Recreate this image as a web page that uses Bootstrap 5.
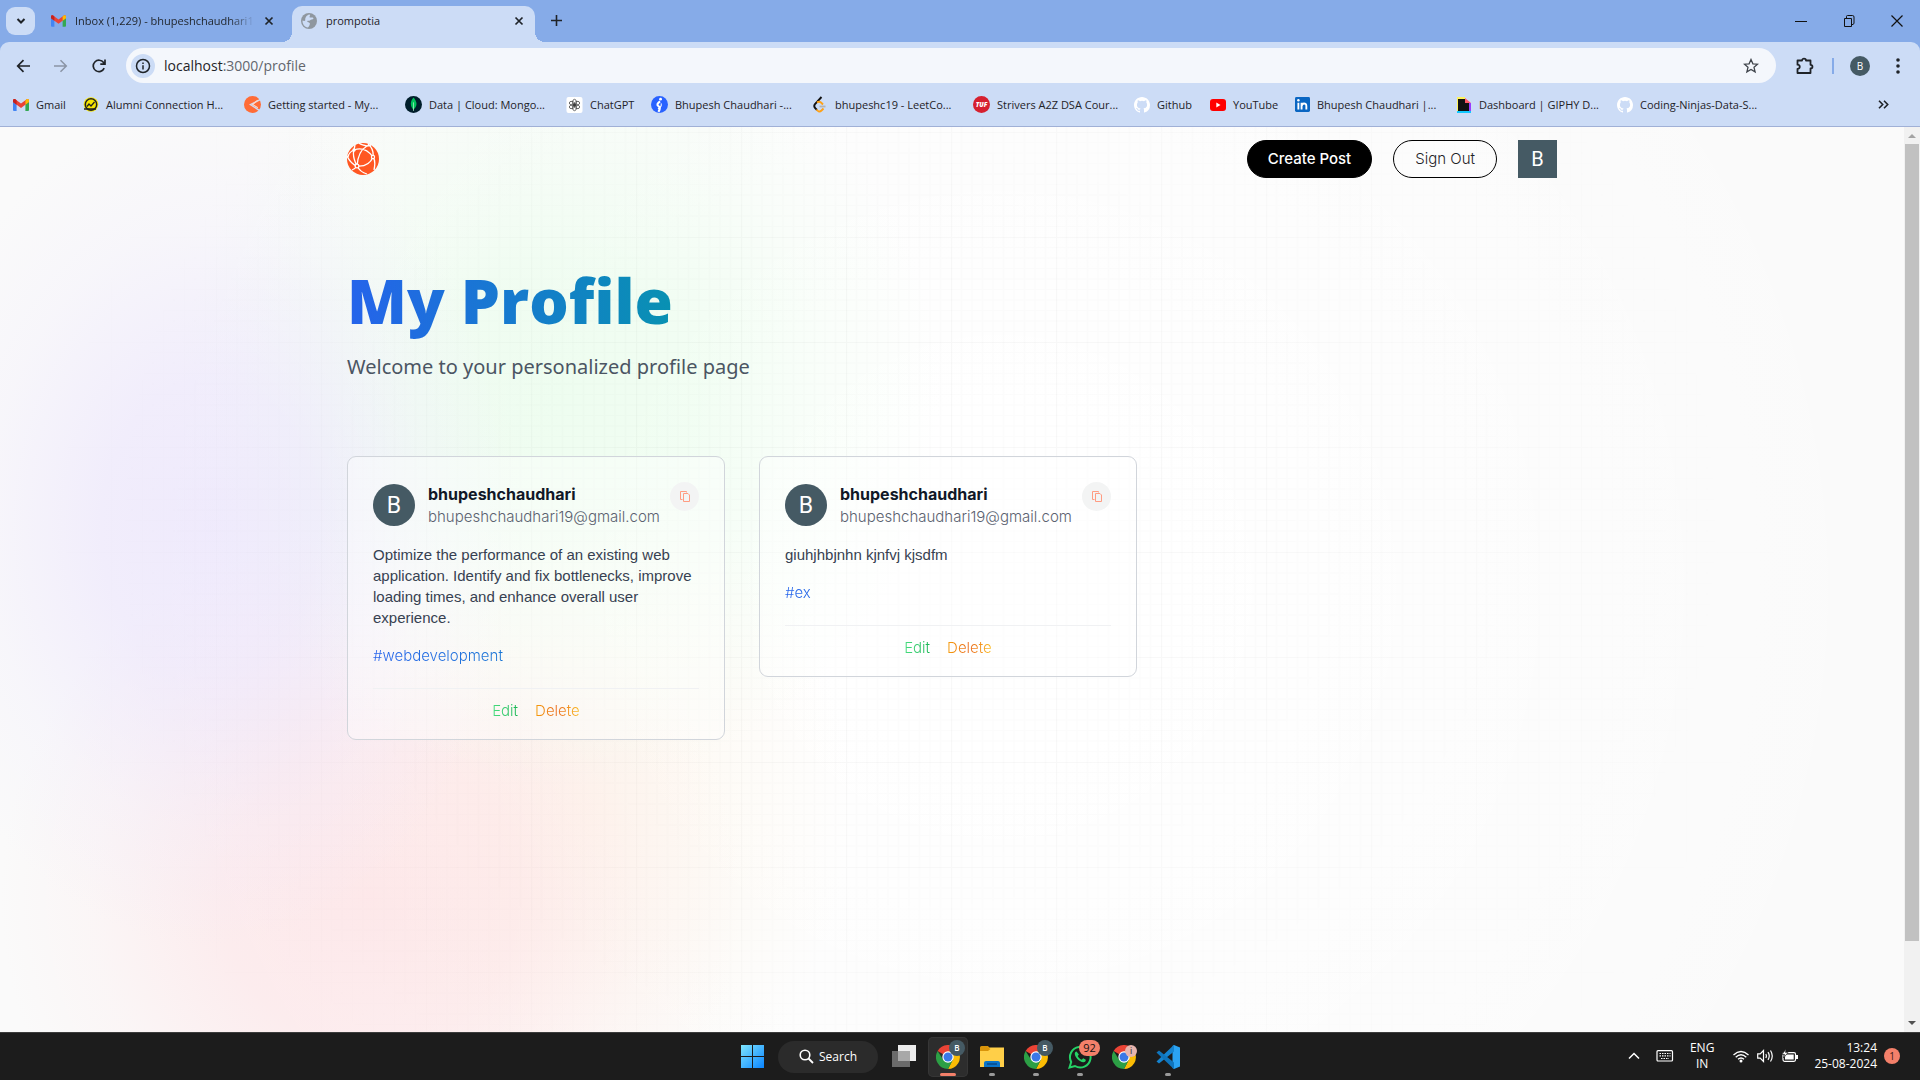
<!DOCTYPE html>
<html lang="en">
<head>
<meta charset="utf-8">
<meta name="viewport" content="width=device-width, initial-scale=1">
<title>prompotia</title>
<link href="https://cdn.jsdelivr.net/npm/bootstrap@5.3.0/dist/css/bootstrap.min.css" rel="stylesheet">
<style>
  :root { --ui: "Open Sans", "Noto Sans", sans-serif; --app: Inter, sans-serif; }
  body { font-family: var(--ui); font-size: 11px; line-height: 16px; color: #1f2328; }
  button { font: inherit; color: inherit; border: 0; background: none; padding: 0; }
  a { color: inherit; text-decoration: none; }
  svg { display: block; flex: none; }

  /* browser window */
  .tabstrip { height: 42px; background: #86abe8; padding-left: 6px; }
  .tab-search { width: 29px; height: 28px; border-radius: 9px; background: #ccdcf6; margin-bottom: 7px; }
  .tab-item { height: 36px; padding: 0 18px 6px 16px; gap: 9px; }
  .tab-idle { width: 257px; }
  .tab-idle .tab-title { -webkit-mask-image: linear-gradient(90deg, #000 86%, transparent); mask-image: linear-gradient(90deg, #000 86%, transparent); }
  .tab-title { flex: 1; overflow: hidden; white-space: nowrap; }
  .tab-current { position: relative; width: 243px; background: #ccdcf6; border-radius: 10px 10px 0 0; padding: 0 11px 6px 9px; }
  .tab-current::before, .tab-current::after { content: ""; position: absolute; bottom: 0; width: 10px; height: 10px; }
  .tab-current::before { left: -10px; background: radial-gradient(circle at 0 0, transparent 10px, #ccdcf6 10px); }
  .tab-current::after { right: -10px; background: radial-gradient(circle at 100% 0, transparent 10px, #ccdcf6 10px); }
  .window-keys { gap: 32px; padding-right: 17px; }
  .toolbar-wrap { background: #86abe8; }
  .toolbar-row { height: 47px; background: #ccdcf6; border-radius: 9px 9px 0 0; padding: 0 18px 0 16px; }
  .omnibox { height: 35px; background: #f4f7fc; border-radius: 18px; padding: 0 17px 0 5px; margin: 0 20px 0 20px; }
  .site-info { width: 24px; height: 24px; border-radius: 50%; background: #ccdcf6; }
  .address { font-size: 14px; color: #62666d; margin-left: 9px; }
  .address b { font-weight: 400; color: #1f2328; }
  .account { width: 20px; height: 20px; border-radius: 50%; background: #455a64; color: #fff; font-size: 10px; }
  .bookmarks { height: 38px; background: #ccdcf6; border-bottom: 1px solid #a0b0d6; padding: 0 31px 6px 13px; }
  .bookmark { gap: 7px; white-space: nowrap; flex: none; }
  .bookmark.long { width: 161px; } .bookmark.mini { width: 70px; } .bookmark.mid { width: 76px; } .bookmark.wide { width: 85px; }

  /* page */
  .viewport { position: relative; background: #fafafa; overflow: hidden; min-height: 0; }
  .glow { position: absolute; inset: 0; background:
      radial-gradient(ellipse 310px 420px at 210px 400px, rgba(232,224,253,.62), rgba(232,224,253,.5) 35%, rgba(236,230,253,.2) 72%, transparent),
      radial-gradient(ellipse 380px 390px at 560px 270px, rgba(226,253,229,.56), rgba(226,253,229,.44) 35%, rgba(232,254,234,.2) 72%, transparent),
      radial-gradient(ellipse 370px 370px at 370px 770px, rgba(254,222,225,.66), rgba(254,222,225,.5) 40%, rgba(254,228,230,.2) 75%, transparent),
      radial-gradient(ellipse 260px 330px at 590px 680px, rgba(253,243,226,.55), transparent),
      radial-gradient(ellipse 900px 900px at 1000px 460px, #fff 20%, rgba(255,255,255,0)); }
  .grid-lines { position: absolute; inset: 0; width: 100%; height: 100%;
      -webkit-mask-image: radial-gradient(ellipse 900px 800px at 920px 400px, #000 30%, transparent); mask-image: radial-gradient(ellipse 900px 800px at 920px 400px, #000 30%, transparent); }
  .page-scroll { position: relative; }
  .page-inner { max-width: 1210px; margin: 0 auto; font-family: var(--app); }
  .site-nav { padding-top: 13px; }
  .nav-keys { gap: 21px; font-size: 15px; }
  .pill { height: 38px; border-radius: 19px; border: 1px solid #000; padding: 0 21px; font-weight: 300; }
  .pill-dark { background: #000; color: #fff; font-weight: 500; padding: 0 20px; }
  .face { background: #455a64; color: #fff; font-family: Roboto, sans-serif; font-weight: 400; flex: none; }
  .face-nav { width: 39px; height: 38px; font-size: 20px; }
  .face-card { width: 42px; height: 42px; border-radius: 50%; font-size: 23px; }
  .page-title { font-family: var(--ui); font-weight: 800; font-size: 62px; line-height: 62px; margin: 91px 0 0; width: max-content;
      background: linear-gradient(90deg, #2563eb, #0891b2); -webkit-background-clip: text; background-clip: text; color: transparent; padding-bottom: 16px; }
  .page-lead { font-family: "Noto Sans", sans-serif; font-size: 20px; line-height: 30px; color: #4b5563; margin: 5px 0 0; }
  .card-list { gap: 34px; margin-top: 74px; }
  .prompt-card { width: 378px; border: 1px solid #d1d5db; border-radius: 9px; background: rgba(255,255,255,.4); padding: 25px 25px 18px; font-size: 15px; line-height: 21px; font-weight: 300; }
  .card-top { height: 46px; }
  .who { margin-left: 13px; }
  .who h3 { font-size: 16px; line-height: 24px; font-weight: 700; color: #111827; margin: 0; }
  .who p { line-height: 22px; color: #5b6270; margin: 0; }
  .copy-key { width: 29px; height: 29px; border-radius: 50%; background: #f3f4f4; }
  .prompt-text { font-family: "Liberation Sans", sans-serif; font-weight: 400; color: #374151; margin: 16px 0 0; }
  .ink { -webkit-background-clip: text; background-clip: text; color: transparent; }
  .prompt-tag { display: block; margin-top: 17px; background-image: linear-gradient(90deg, #2563eb, #0891b2); }
  .card-foot { border-top: 1px solid #f0f1f3; margin-top: 22px; padding-top: 11px; gap: 17px; }
  .ink-green { background-image: linear-gradient(90deg, #4ade80, #16b552); }
  .ink-orange { background-image: linear-gradient(90deg, #f59e0b, #ea6a1b 50%, #fbbf24); }
  .scroller { width: 16px; background: #f1f1f1; flex: none; padding-top: 5px; padding-bottom: 4px; }
  .scroller-thumb { flex: 0 0 89%; width: 14px; background: #c1c1c1; }

  /* taskbar */
  .taskbar { height: 48px; background: #1c1c1c; border-top: 1px solid #3c3c3c; color: #fff; position: relative; font-size: 12px; }
  .dock { gap: 4px; }
  .dock-key { position: relative; width: 40px; height: 40px; border-radius: 5px; }
  .dock-key.open { background: #2d2d2d; box-shadow: inset 0 0 0 1px #363636; }
  .dock-key.run::after { content: ""; position: absolute; bottom: 1px; left: 17px; width: 6px; height: 3px; border-radius: 2px; background: #9a9a9a; }
  .dock-key.open::after { left: 12px; width: 16px; background: #f4806a; }
  .dock-badge { position: absolute; top: 3px; left: 21px; width: 16px; height: 16px; border-radius: 50%; background: #455a64; font-size: 8px; font-weight: 600; line-height: 16px; text-align: center; }
  .dock-badge.count { top: 3px; left: 19px; width: 21px; background: #f4806a; color: #111; border-radius: 8px; font-size: 11px; font-weight: 400; }
  .dock-badge.pic { left: 21px; top: 8px; width: 12px; height: 12px; background: #e7b4ae; color: #444; line-height: 12px; }
  .dock-search { width: 100px; height: 32px; border-radius: 16px; background: #2b2b2b; gap: 5px; margin: 0 2px; }
  .tray { position: absolute; right: 20px; top: 0; height: 46px; line-height: 16px; }
  .tray-lang { margin: 0 19px 0 16px; text-align: center; }
  .tray-clock { margin: 0 7px 0 16px; text-align: right; }
  .bell { width: 16px; height: 16px; border-radius: 50%; background: #f4806a; color: #3a1a14; font-size: 10px; }
</style>
<script src="https://cdn.jsdelivr.net/npm/bootstrap@5.3.0/dist/js/bootstrap.bundle.min.js"></script>
</head>
<body class="vh-100 d-flex flex-column overflow-hidden">

<svg width="0" height="0" class="position-absolute" aria-hidden="true">
  <symbol id="i-gmail" viewBox="0 0 16 12"><path d="M0 1.5V11a1 1 0 0 0 1 1h2.600V5z" fill="#4285f4"/><path d="M16 1.500V11a1 1 0 0 1-1 1h-2.600V5z" fill="#34a853"/><path d="M0 1.500C0 0 1.600-.4 2.600.4L8 4.500 13.400.4C14.400-.4 16 0 16 1.500V3L8 9 0 3z" fill="#ea4335"/><path d="M12.400 1.200l1-.8C14.400-.4 16 0 16 1.500V3l-3.600 2.700z" fill="#fbbc04"/><path d="M0 1.500C0 0 1.600-.4 2.600.4l1 .8v4.500L0 3z" fill="#c5221f"/></symbol>
  <symbol id="i-x" viewBox="0 0 10 10"><path d="M1.500 1.500l7 7M8.500 1.500l-7 7" stroke="currentColor" stroke-width="1.700" fill="none"/></symbol>
  <symbol id="i-github" viewBox="0 0 16 16"><path fill="#fff" d="M8 0C3.580 0 0 3.580 0 8c0 3.540 2.290 6.530 5.470 7.590.4.070.55-.17.55-.38 0-.19-.01-.82-.01-1.490-2.010.37-2.530-.49-2.690-.94-.09-.23-.48-.94-.82-1.130-.28-.15-.68-.52-.01-.53.63-.01 1.080.58 1.230.82.72 1.210 1.870.87 2.330.66.070-.52.28-.87.51-1.070-1.780-.2-3.640-.89-3.640-3.950 0-.87.31-1.590.82-2.150-.08-.2-.36-1.020.08-2.120 0 0 .67-.21 2.200.82a7.600 7.600 0 0 1 4 0c1.530-1.040 2.200-.82 2.200-.82.44 1.100.16 1.920.08 2.120.51.56.82 1.270.82 2.150 0 3.070-1.870 3.750-3.650 3.950.29.25.54.73.54 1.480 0 1.070-.01 1.930-.01 2.200 0 .21.15.46.55.38A8 8 0 0 0 16 8c0-4.420-3.580-8-8-8z"/></symbol>
  <symbol id="i-chrome" viewBox="0 0 24 24"><path d="M12 12L1.600 6A12 12 0 0 1 22.400 6z" fill="#ea4335"/><path d="M12 6.500H22.600A12 12 0 0 1 12 24l4.800-9.300z" fill="#fbbc04"/><path d="M7.200 14.700L1.600 6A12 12 0 0 0 12 24l4.800-9.300z" fill="#2c9f45"/><circle cx="12" cy="12" r="5.700" fill="#fff"/><circle cx="12" cy="12" r="4.500" fill="#3b78e7"/></symbol>
  <symbol id="i-copy" viewBox="0 0 12 13"><path d="M4.500 3.500h4.500l1.500 1.500v6.500h-6zM3.500 9.500h-2v-8h6v1" fill="none" stroke="#ff9c82" stroke-width="1"/></symbol>
</svg>

<header>
  <div class="tabstrip d-flex align-items-end">
    <button class="tab-search d-flex align-items-center justify-content-center" aria-label="Search tabs"><svg width="10" height="8" viewBox="0 0 10 8"><path d="M1.500 2L5 5.500 8.500 2" fill="none" stroke="#1f2328" stroke-width="2"/></svg></button>
    <div class="tab-item tab-idle d-flex align-items-center">
      <svg width="15" height="12"><use href="#i-gmail"/></svg>
      <span class="tab-title">Inbox (1,229) - bhupeshchaudhari1</span>
      <button aria-label="Close tab"><svg width="10" height="10"><use href="#i-x"/></svg></button>
    </div>
    <div class="tab-item tab-current d-flex align-items-center">
      <svg width="16" height="16" viewBox="0 0 16 16"><circle cx="8" cy="8" r="8" fill="#8f979f"/><path d="M8.500 1.600c1.500.4-.5 1.800.3 2.800 1 .6 3-.4 3.600.8.300 1.300-2.600 1-3.400 2.200-1 .9-2.500-.2-2.800 1 .2 1 2.200.6 2.700 1.800 0 1.500-1 3.600-2 4.300C3.500 14 1.300 11 1.500 7.500 2.400 8 4 8.400 4.300 7.200 4 5.500 5 2.200 8.500 1.600z" fill="#ccdcf6"/></svg>
      <span class="tab-title">prompotia</span>
      <button aria-label="Close tab"><svg width="10" height="10"><use href="#i-x"/></svg></button>
    </div>
    <button class="ms-3 mb-3" aria-label="New tab"><svg width="11" height="11" viewBox="0 0 11 11"><path d="M5.500 0v11M0 5.500h11" stroke="#1f2328" stroke-width="1.600"/></svg></button>
    <div class="window-keys d-flex align-items-center ms-auto h-100">
      <button aria-label="Minimize"><svg width="12" height="12"><path d="M0 6.500h12" stroke="#111"/></svg></button>
      <button class="ms-1" aria-label="Restore"><svg width="12" height="12" viewBox="0 0 12 12"><path d="M1.500 3.500h7v8h-7zM3.500 3V1.500q0-1 1-1h5q1.500 0 1.500 1.500v6q0 1-1 1.500H9" fill="none" stroke="#111"/></svg></button>
      <button class="ms-1" aria-label="Close"><svg width="12" height="12"><path d="M.5.5l11 11M11.500.5l-11 11" stroke="#111" stroke-width="1.200"/></svg></button>
    </div>
  </div>
  <div class="toolbar-wrap">
    <div class="toolbar-row d-flex align-items-center">
      <button aria-label="Back"><svg width="14" height="14" viewBox="0 0 14 14"><path d="M14 7H2M7.500 1.200L1.700 7l5.800 5.800" fill="none" stroke="#1f2328" stroke-width="1.700"/></svg></button>
      <button class="ms-4" aria-label="Forward"><svg width="14" height="14" viewBox="0 0 14 14"><path d="M0 7h12M6.500 1.200L12.300 7l-5.800 5.800" fill="none" stroke="#8a94a5" stroke-width="1.500"/></svg></button>
      <button class="ms-4" aria-label="Reload"><svg width="14" height="14" viewBox="0 0 14 14"><path d="M12.200 9.200A5.700 5.700 0 1 1 11.600 3.600L12.800 5M13 .5V5.200H8.300" fill="none" stroke="#1f2328" stroke-width="1.700"/></svg></button>
      <div class="omnibox d-flex align-items-center flex-grow-1">
        <button class="site-info d-flex align-items-center justify-content-center" aria-label="Site information"><svg width="16" height="16" viewBox="0 0 16 16"><circle cx="8" cy="8" r="6.500" fill="none" stroke="#1f2328" stroke-width="1.500"/><path d="M8 7.200V11.500M8 4.500v1.500" stroke="#1f2328" stroke-width="1.500"/></svg></button>
        <span class="address flex-grow-1" role="textbox" aria-label="Address" contenteditable="true" spellcheck="false"><b>localhost</b>:3000/profile</span>
        <button aria-label="Bookmark this tab"><svg width="16" height="16" viewBox="0 0 16 16"><path d="M8 1.500l1.900 4.300 4.700.4-3.600 3.100 1.100 4.600L8 11.500l-4.100 2.400L5 9.300 1.400 6.200l4.700-.4z" fill="none" stroke="#3f444b" stroke-width="1.300"/></svg></button>
      </div>
      <button aria-label="Extensions"><svg width="18" height="18" viewBox="0 0 18 18"><path d="M1.500 3.500h4.500c0-2.500 4-2.500 4 0h4.500v4.300c2.600 0 2.600 3.700 0 3.700v4.500h-13v-4c3-.5 3-4 0-4.300z" fill="none" stroke="#1f2328" stroke-width="1.800" stroke-linejoin="round"/></svg></button>
      <svg class="ms-3" width="12" height="16"><path d="M3 0v16" stroke="#86abe8" stroke-width="2"/></svg>
      <button class="account ms-2 d-flex align-items-center justify-content-center" aria-label="Account">B</button>
      <button class="ms-3 ps-1" aria-label="Menu"><svg width="12" height="16" viewBox="0 0 12 16"><g fill="#1f2328"><circle cx="8" cy="2" r="1.800"/><circle cx="8" cy="8" r="1.800"/><circle cx="8" cy="14" r="1.800"/></g></svg></button>
    </div>
  </div>
  <nav class="bookmarks d-flex align-items-center">
    <a href="#" class="bookmark mini d-flex align-items-center"><svg width="16" height="12"><use href="#i-gmail"/></svg>Gmail</a>
    <a href="#" class="bookmark long d-flex align-items-center"><svg width="16" height="16" viewBox="0 0 16 16"><circle cx="8" cy="7.500" r="7.300" fill="#f7e600"/><circle cx="8" cy="7.500" r="5.700" fill="none" stroke="#222" stroke-width="1.500"/><path d="M1 12h12M4 9.500l2-2.500 2 2 3.500-4" fill="none" stroke="#222" stroke-width="1.300"/></svg>Alumni Connection H...</a>
    <a href="#" class="bookmark long d-flex align-items-center"><svg width="17" height="17" viewBox="0 0 16 16"><circle cx="8" cy="8" r="8" fill="#ff6c37"/><path d="M16 3L6 8l9 6" fill="none" stroke="#ccdcf6" stroke-width="1.300"/><path d="M13 4L8 8l5 3" fill="none" stroke="#ffd9c9" stroke-width="1"/></svg>Getting started - My...</a>
    <a href="#" class="bookmark long d-flex align-items-center"><svg width="17" height="17" viewBox="0 0 16 16"><circle cx="8" cy="8" r="8" fill="#001e2b"/><path d="M8 1.500c3.500 4 4 8-.1 11.500C4.500 9.500 4.800 5 8 1.500z" fill="#00c25a"/><path d="M8 6v8" stroke="#b8f0cc" stroke-width=".7"/></svg>Data | Cloud: Mongo...</a>
    <a href="#" class="bookmark wide d-flex align-items-center"><svg width="17" height="16" viewBox="0 0 16 16"><rect width="16" height="16" rx="2" fill="#fff"/><g fill="none" stroke="#333" stroke-width=".7"><ellipse cx="8" cy="5.500" rx="2" ry="3.200"/><ellipse cx="8" cy="5.500" rx="2" ry="3.200" transform="rotate(60 8 8)"/><ellipse cx="8" cy="5.500" rx="2" ry="3.200" transform="rotate(120 8 8)"/><ellipse cx="8" cy="5.500" rx="2" ry="3.200" transform="rotate(180 8 8)"/><ellipse cx="8" cy="5.500" rx="2" ry="3.200" transform="rotate(240 8 8)"/><ellipse cx="8" cy="5.500" rx="2" ry="3.200" transform="rotate(300 8 8)"/></g></svg>ChatGPT</a>
    <a href="#" class="bookmark long d-flex align-items-center"><svg width="17" height="17" viewBox="0 0 16 16"><circle cx="8" cy="8" r="8" fill="#2962ff"/><path d="M8.500 5q-4 3-1.500 4.500 2.500 1.500 0 5.500" fill="none" stroke="#fff" stroke-width="2"/><path d="M6.500 12q4-1.500 3-5" fill="none" stroke="#fff" stroke-width="1"/><circle cx="9" cy="3" r="1.300" fill="#fff"/></svg>Bhupesh Chaudhari -...</a>
    <a href="#" class="bookmark long d-flex align-items-center"><svg width="16" height="17" viewBox="0 0 16 17"><path d="M9.500 1L3 8q-1.500 2 0 4l2 2" fill="none" stroke="#111" stroke-width="1.900"/><path d="M5 6.500q2-1.600 4 0l2 2M4.500 13.500q2.500 3.500 5 1l2-2" fill="none" stroke="#ffa116" stroke-width="1.900"/><path d="M7.500 10.500h6" stroke="#b3b3b3" stroke-width="1.800"/></svg>bhupeshc19 - LeetCo...</a>
    <a href="#" class="bookmark long d-flex align-items-center"><svg width="17" height="17" viewBox="0 0 16 16"><circle cx="8" cy="8" r="8" fill="#d6202f"/><text x="8" y="10" font-size="6" font-weight="800" font-style="italic" text-anchor="middle" fill="#fff">TUF</text></svg>Strivers A2Z DSA Cour...</a>
    <a href="#" class="bookmark mid d-flex align-items-center"><svg width="16" height="16"><use href="#i-github"/></svg>Github</a>
    <a href="#" class="bookmark wide d-flex align-items-center"><svg width="16" height="12" viewBox="0 0 16 12"><rect width="16" height="12" rx="3" fill="#f00"/><path d="M6.300 3.500v5l4.200-2.500z" fill="#fff"/></svg>YouTube</a>
    <a href="#" class="bookmark long d-flex align-items-center"><svg width="15" height="15" viewBox="0 0 16 16"><rect width="16" height="16" rx="1.500" fill="#0a66c2"/><path d="M3.600 6.200v7M7 13.200v-7M7.200 9.500c0-3.300 4.900-3.600 4.900 0v3.700" fill="none" stroke="#fff" stroke-width="2"/><circle cx="3.600" cy="3.500" r="1.300" fill="#fff"/></svg>Bhupesh Chaudhari |...</a>
    <a href="#" class="bookmark long d-flex align-items-center"><svg width="16" height="16" viewBox="0 0 16 16"><path d="M1 0h8v2H3v12H1z" fill="#fff35c"/><path d="M1 14h14v2H1z" fill="#12c8ff"/><path d="M13 6h2v8h-2z" fill="#9a3cff"/><path d="M9 1l6 5H9z" fill="#ff5a66"/><path d="M2 2h7v4h4v8H2z" fill="#111"/></svg>Dashboard | GIPHY D...</a>
    <a href="#" class="bookmark long d-flex align-items-center"><svg width="16" height="16"><use href="#i-github"/></svg>Coding-Ninjas-Data-S...</a>
    <button class="ms-auto" aria-label="More bookmarks"><svg width="11" height="9" viewBox="0 0 11 9"><path d="M1 .8l3.700 3.700L1 8.200M6 .8l3.700 3.700L6 8.200" fill="none" stroke="#1f2328" stroke-width="1.600"/></svg></button>
  </nav>
</header>

<div class="d-flex flex-grow-1 overflow-hidden">
  <main class="viewport flex-grow-1">
    <div class="glow"></div>
    <svg class="grid-lines" aria-hidden="true">
      <defs><pattern id="cells" x="6" y="5" width="105" height="105" patternUnits="userSpaceOnUse" viewBox="0 0 100 100">
        <path d="M10 0v100M20 0v100M30 0v100M40 0v100M50 0v100M60 0v100M70 0v100M80 0v100M90 0v100M0 10h100M0 20h100M0 30h100M0 40h100M0 50h100M0 60h100M0 70h100M0 80h100M0 90h100" stroke="#000" stroke-opacity=".013"/>
        <path d="M.5 0v100M0 .5h100" stroke="#000" stroke-opacity=".028"/></pattern></defs>
      <rect width="100%" height="100%" fill="url(#cells)"/>
    </svg>
    <div class="page-scroll">
      <div class="page-inner">
        <nav class="site-nav d-flex align-items-center justify-content-between">
          <a href="#" aria-label="Home"><svg width="32" height="32" viewBox="0 0 32 32"><circle cx="16" cy="16" r="16" fill="#ff5722"/><g fill="none" stroke="#fff" stroke-width="1.300"><path d="M7 7Q18 3 26 14Q22 24 10 23Q4 21 0 13M7 7Q2 9 1 14M7 7Q5 13 10 23M20 3Q11 8 10 23M26 14Q27 6 21 1M26 14Q29 18 27 27M10 23Q13 29 20 31M20 3Q14 2 12 0M10 23Q8 26 5 27M20 3L24 2M7 7L8 2"/></g><g fill="#fff"><circle cx="7" cy="7" r="1.700"/><circle cx="26" cy="14" r="2.200"/><circle cx="10" cy="23" r="2.500"/></g><g fill="#ff5722"><circle cx="26" cy="14" r="1"/><circle cx="10" cy="23" r="1.200"/></g></svg></a>
          <div class="nav-keys d-flex align-items-center">
            <a href="#" class="pill pill-dark d-flex align-items-center">Create Post</a>
            <button class="pill">Sign Out</button>
            <a href="#" class="face face-nav d-flex align-items-center justify-content-center">B</a>
          </div>
        </nav>
        <h1 class="page-title">My Profile</h1>
        <p class="page-lead">Welcome to your personalized profile page</p>
        <section class="card-list d-flex align-items-start">
          <article class="prompt-card">
            <div class="card-top d-flex">
              <span class="face face-card d-flex align-items-center justify-content-center align-self-center">B</span>
              <div class="who flex-grow-1"><h3>bhupeshchaudhari</h3><p>bhupeshchaudhari19@gmail.com</p></div>
              <button class="copy-key d-flex align-items-center justify-content-center" aria-label="Copy"><svg width="12" height="13"><use href="#i-copy"/></svg></button>
            </div>
            <p class="prompt-text">Optimize the performance of an existing web application. Identify and fix bottlenecks, improve loading times, and enhance overall user experience.</p>
            <a href="#" class="prompt-tag ink">#webdevelopment</a>
            <div class="card-foot d-flex justify-content-center"><button class="ink ink-green">Edit</button><button class="ink ink-orange">Delete</button></div>
          </article>
          <article class="prompt-card">
            <div class="card-top d-flex">
              <span class="face face-card d-flex align-items-center justify-content-center align-self-center">B</span>
              <div class="who flex-grow-1"><h3>bhupeshchaudhari</h3><p>bhupeshchaudhari19@gmail.com</p></div>
              <button class="copy-key d-flex align-items-center justify-content-center" aria-label="Copy"><svg width="12" height="13"><use href="#i-copy"/></svg></button>
            </div>
            <p class="prompt-text">giuhjhbjnhn kjnfvj kjsdfm</p>
            <a href="#" class="prompt-tag ink">#ex</a>
            <div class="card-foot d-flex justify-content-center"><button class="ink ink-green">Edit</button><button class="ink ink-orange">Delete</button></div>
          </article>
        </section>
      </div>
    </div>
  </main>
  <div class="scroller d-flex flex-column align-items-center" aria-hidden="true">
    <svg width="8" height="12" viewBox="0 0 8 12"><path d="M0 6l4-4 4 4z" fill="#a3a3a3"/></svg>
    <div class="scroller-thumb"></div>
    <svg class="mt-auto" width="8" height="7" viewBox="0 0 8 7"><path d="M0 0h8L4 4z" fill="#505050"/></svg>
  </div>
</div>

<footer class="taskbar flex-shrink-0">
  <div class="dock d-flex align-items-center justify-content-center h-100">
    <button class="dock-key d-flex align-items-center justify-content-center" aria-label="Start"><svg width="23" height="23" viewBox="0 0 23 23"><linearGradient id="win" x2="1" y2="1"><stop stop-color="#7ee6ff"/><stop offset="1" stop-color="#0a84ff"/></linearGradient><path d="M0 0h11v11H0zM12 0h11v11H12zM0 12h11v11H0zM12 12h11v11H12z" fill="url(#win)"/></svg></button>
    <button class="dock-search d-flex align-items-center justify-content-center"><svg width="15" height="15" viewBox="0 0 15 15"><circle cx="6" cy="6" r="4.800" fill="none" stroke="#fff" stroke-width="1.600"/><path d="M9.500 9.500l4.500 4.500" stroke="#fff" stroke-width="1.800"/></svg>Search</button>
    <button class="dock-key d-flex align-items-center justify-content-center" aria-label="Task view"><svg width="24" height="23" viewBox="0 0 24 23"><path d="M6 0h18v16H6z" fill="#ececec"/><path d="M0 6h18v16H0z" fill="#6b6b6b"/><path d="M6 6h12v10H6z" fill="#a8a8a8"/></svg></button>
    <button class="dock-key open run d-flex align-items-center justify-content-center" aria-label="Chrome"><svg width="24" height="24"><use href="#i-chrome"/></svg><span class="dock-badge">B</span></button>
    <button class="dock-key run d-flex align-items-center justify-content-center" aria-label="File Explorer"><svg width="24" height="22" viewBox="0 0 24 22"><path d="M0 1.500Q0 0 1.500 0H8l2.500 3H0z" fill="#d9940a"/><path d="M0 5V3l10.500-1.500H24V21H0z" fill="#ffcf48"/><path d="M0 5V1.500h8L10.500 3 8 5z" fill="#d9940a"/><path d="M4 21v-4q0-2 2-2h12q2 0 2 2v4z" fill="#0a74c9"/><path d="M7 17h10v2H7z" fill="#0a5396"/></svg></button>
    <button class="dock-key run d-flex align-items-center justify-content-center" aria-label="Chrome profile"><svg width="24" height="24"><use href="#i-chrome"/></svg><span class="dock-badge">B</span></button>
    <button class="dock-key run d-flex align-items-center justify-content-center" aria-label="WhatsApp"><svg width="24" height="24" viewBox="0 0 24 24"><path d="M1.500 22.500L3.200 17A10.300 10.300 0 1 1 7 21z" fill="none" stroke="#25d366" stroke-width="2"/><path d="M8.500 6.500c-1 0-2 1.300-1.700 2.800.8 3.800 4.500 7.500 8.500 8 1.800 0 2.700-1.400 2.500-2.500l-2.600-1.500-1.400 1.500c-1.800-.7-3.300-2.100-4.100-3.900l1.200-1.400z" fill="#25d366"/></svg><span class="dock-badge count">92</span></button>
    <button class="dock-key d-flex align-items-center justify-content-center" aria-label="Chrome guest"><svg width="24" height="24"><use href="#i-chrome"/></svg><span class="dock-badge pic">i</span></button>
    <button class="dock-key run d-flex align-items-center justify-content-center" aria-label="Visual Studio Code"><svg width="24" height="24" viewBox="0 0 24 24"><path d="M18 0l6 2.500v19L18 24l-1.500-1V1z" fill="#2ba3f2"/><path d="M18 0v6.500L3 18.500l-2.500-2L17 .8z" fill="#1583cf"/><path d="M18 24v-6.500L3 5.500l-2.500 2L17 23.200z" fill="#0f75bd"/></svg></button>
  </div>
  <div class="tray d-flex align-items-center">
    <svg width="12" height="8" viewBox="0 0 12 8"><path d="M1 6.500l5-5 5 5" fill="none" stroke="#fff" stroke-width="1.500"/></svg>
    <svg class="ms-3" width="18" height="12" viewBox="0 0 18 12"><rect x="1" y=".7" width="15.500" height="10.300" rx="1" fill="none" stroke="#fff" stroke-width="1.200"/><path d="M3.500 3.500h11M3.500 5.800h11M5 8.500h8" stroke="#fff" stroke-width="1.200" stroke-dasharray="1.500 1"/></svg>
    <div class="tray-lang">ENG<br>IN</div>
    <svg width="16" height="13" viewBox="0 0 16 13"><g fill="none" stroke="#fff" stroke-width="1.300"><path d="M.5 5Q8-2 15.500 5M2.700 7.200Q8 2.300 13.300 7.200M5 9.300Q8 6.600 11 9.300"/></g><circle cx="8" cy="11" r="1.500" fill="#fff"/></svg>
    <svg class="ms-2" width="17" height="14" viewBox="0 0 17 14"><path d="M.7 4.800h2.500L6.500 1.500v11L3.200 9.200H.7z" fill="none" stroke="#fff" stroke-width="1.200"/><path d="M8.800 5q1.200 2 0 4M11 3.200q2.500 3.800 0 7.600M13.500 1.500q3.500 5.500 0 11" fill="none" stroke="#fff" stroke-width="1.200"/></svg>
    <svg class="ms-2" width="16" height="14" viewBox="0 0 16 14"><rect x="1" y="3.700" width="12.500" height="8.600" rx="1.500" fill="none" stroke="#fff" stroke-width="1.200"/><path d="M3 5.500h8.700v5H3zM14 6h2v4h-2z" fill="#fff"/><path d="M4 0L0 5.500h2.500L1.500 9 6 3.500H3.500z" fill="#fff" stroke="#1c1c1c" stroke-width=".7"/></svg>
    <div class="tray-clock">13:24<br>25-08-2024</div>
    <span class="bell d-flex align-items-center justify-content-center">1</span>
  </div>
</footer>
</body>
</html>
